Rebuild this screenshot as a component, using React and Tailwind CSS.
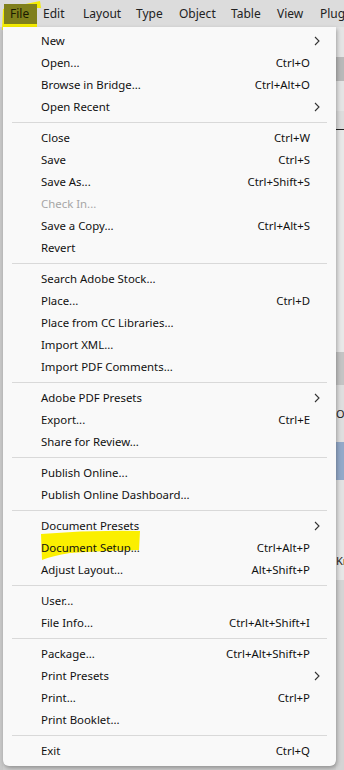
import React from "react";

const font = { fontFamily: '"Segoe UI", "Noto Sans", "Liberation Sans", sans-serif' };

const groups = [
  [
    { label: "New", sub: true },
    { label: "Open...", key: "Ctrl+O" },
    { label: "Browse in Bridge...", key: "Ctrl+Alt+O" },
    { label: "Open Recent", sub: true },
  ],
  [
    { label: "Close", key: "Ctrl+W" },
    { label: "Save", key: "Ctrl+S" },
    { label: "Save As...", key: "Ctrl+Shift+S" },
    { label: "Check In...", disabled: true },
    { label: "Save a Copy...", key: "Ctrl+Alt+S" },
    { label: "Revert" },
  ],
  [
    { label: "Search Adobe Stock..." },
    { label: "Place...", key: "Ctrl+D" },
    { label: "Place from CC Libraries..." },
    { label: "Import XML..." },
    { label: "Import PDF Comments..." },
  ],
  [
    { label: "Adobe PDF Presets", sub: true },
    { label: "Export...", key: "Ctrl+E" },
    { label: "Share for Review..." },
  ],
  [
    { label: "Publish Online..." },
    { label: "Publish Online Dashboard..." },
  ],
  [
    { label: "Document Presets", sub: true },
    { label: "Document Setup...", key: "Ctrl+Alt+P", marked: true },
    { label: "Adjust Layout...", key: "Alt+Shift+P" },
  ],
  [
    { label: "User..." },
    { label: "File Info...", key: "Ctrl+Alt+Shift+I" },
  ],
  [
    { label: "Package...", key: "Ctrl+Alt+Shift+P" },
    { label: "Print Presets", sub: true },
    { label: "Print...", key: "Ctrl+P" },
    { label: "Print Booklet..." },
  ],
  [{ label: "Exit", key: "Ctrl+Q" }],
];

const menus = [
  { name: "File", w: "w-[33px]" },
  { name: "Edit", w: "w-[40px]" },
  { name: "Layout", w: "w-[53px]" },
  { name: "Type", w: "w-[43px]" },
  { name: "Object", w: "w-[52px]" },
  { name: "Table", w: "w-[46px]" },
  { name: "View", w: "w-[43px]" },
  { name: "Plugins", w: "w-[60px]" },
];

function Chevron() {
  return (
    <svg width="6" height="10" viewBox="0 0 6 10" className="block">
      <polyline points="1,1 5,5 1,9" fill="none" stroke="#333" strokeWidth="1.1" />
    </svg>
  );
}

function Row({ item }) {
  return (
    <div className="flex h-[22px] items-center pl-[38px] pr-[6px] text-[11.4px]">
      <span className={`relative flex-1 whitespace-nowrap ${item.disabled ? "text-[#a6a6a6]" : "text-[#111]"}`}>
        {item.marked && (
          <svg
            className="absolute left-[-1px] top-[-9px]"
            width="102"
            height="30"
            viewBox="0 0 102 30"
          >
            <path d="M1 4 Q50 0 100 1 L99 20 Q60 21 30 23 Q12 26 2 30 Z" fill="#fbef00" />
          </svg>
        )}
        <span className="relative">{item.label}</span>
      </span>
      {item.key && <span className="whitespace-nowrap text-[#111]">{item.key}</span>}
      <span className="flex w-[20px] justify-end pr-[10px]">{item.sub && <Chevron />}</span>
    </div>
  );
}

export default function App() {
  return (
    <div className="relative h-[770px] w-[344px] overflow-hidden bg-[#cfcfcf]" style={font}>
      {/* highlighter around File */}
      <svg className="absolute left-0 top-0" width="44" height="34" viewBox="0 0 44 34">
        <path d="M2 30 L3 9 Q20 5 40 1 L41 8 L37 8 L37 27 L4 27 L4 30 Z" fill="#f4ec00" />
      </svg>

      {/* menu bar */}
      <div className="flex h-[27px] items-center bg-[#dcdcdc] pl-[4px] text-[12px] text-[#222]">
        {menus.map((m, i) => (
          <div
            key={m.name}
            className={`relative z-10 flex h-[20px] shrink-0 items-center pl-[6px] ${m.w} ${i === 0 ? "bg-[#80801c] text-[#1a1a00]" : ""}`}
          >
            {m.name}
          </div>
        ))}
      </div>

      {/* app content behind the menu */}
      <div className="flex h-[743px]">
        <div className="w-[3px] bg-[#c9c9c9]" />
        <div className="flex-1" />
        <div className="flex w-[8px] flex-col text-[11px] leading-none text-[#222]">
          <div className="h-[30px] bg-[#e4e4e4]" />
          <div className="h-[24px] bg-[#b9b9b9]" />
          <div className="h-[30px] bg-[#e4e4e4]" />
          <div className="h-[18px] bg-[#dcdcdc]" />
          <div className="h-px bg-[#222]" />
          <div className="h-[222px] bg-[#e8e8e8]" />
          <div className="h-[33px] bg-[#c4c4c4]" />
          <div className="flex h-[57px] items-center overflow-hidden bg-[#dedede]">Op</div>
          <div className="h-[38px] bg-[#93a9c9]" />
          <div className="h-[60px] bg-[#e2e2e2]" />
          <div className="flex h-[40px] items-center overflow-hidden bg-[#e6e6e6]">Kn</div>
          <div className="flex-1 bg-[#d4d4d4]" />
        </div>
      </div>

      {/* File menu */}
      <div className="absolute left-[3px] top-[27px] z-20 w-[333px] rounded-b-[6px] bg-[#f9f9f9] pt-[3px] pb-[4px] shadow-[1px_2px_4px_rgba(0,0,0,0.3)]">
        {groups.map((g, gi) => (
          <div key={gi}>
            {gi > 0 && <div className="mx-[9px] my-[4px] h-px bg-[#d9d9d9]" />}
            {g.map((item) => (
              <Row key={item.label} item={item} />
            ))}
          </div>
        ))}
      </div>
    </div>
  );
}
